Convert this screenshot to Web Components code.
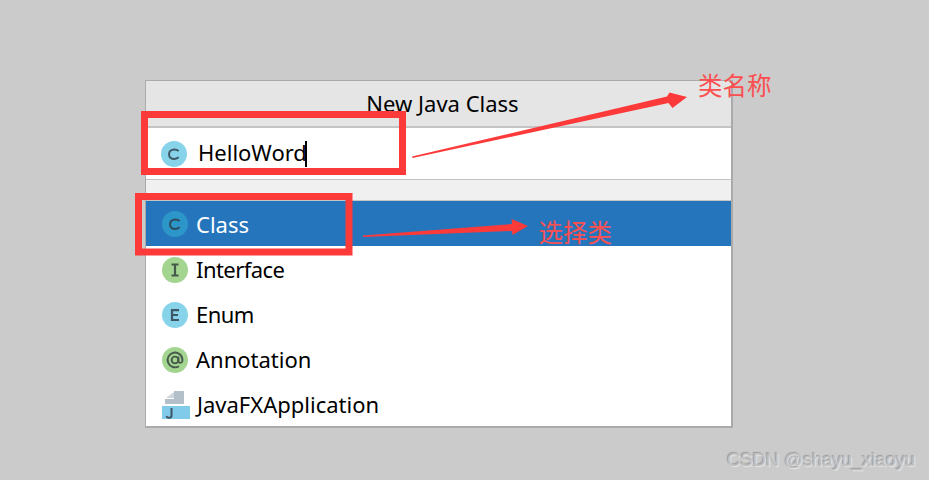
<!DOCTYPE html>
<html><head><meta charset="utf-8"><style>
html,body{margin:0;padding:0;background:#cbcbcb;}
body{width:929px;height:480px;overflow:hidden;font-family:"Noto Sans","Open Sans",sans-serif;}
</style></head><body>
<new-class-page></new-class-page>
<script>
const ICONS={
 c:`<svg width="26" height="26" viewBox="0 0 26 26"><circle cx="13" cy="13" r="13" fill="var(--bg,#87d3ea)"/><path d="M17.6 10.2C16.6 9 15.2 8.4 13.4 8.4C10.2 8.4 8 10.4 8 13.2C8 16 10.2 18 13.4 18C15.2 18 16.6 17.4 17.6 16.2" fill="none" stroke="var(--fg,#3f5866)" stroke-width="2"/></svg>`,
 i:`<svg width="26" height="26" viewBox="0 0 26 26"><circle cx="13" cy="13" r="13" fill="#a3d490"/><path d="M9.5 7.5H16.5M13 7.5V18.5M9.5 18.5H16.5" fill="none" stroke="#47594b" stroke-width="2.2"/></svg>`,
 e:`<svg width="26" height="26" viewBox="0 0 26 26"><circle cx="13" cy="13" r="13" fill="#87d3ea"/><path d="M17 8.2H10V18H17M10 13H16" fill="none" stroke="#3f5866" stroke-width="2.2"/></svg>`,
 a:`<svg width="26" height="26" viewBox="0 0 26 26"><circle cx="13" cy="13" r="13" fill="#a3d490"/><circle cx="13" cy="13" r="3.4" fill="none" stroke="#47594b" stroke-width="1.9"/><path d="M16.4 9.4V14.6A2.1 2.1 0 0 0 20.4 14V13A7.4 7.4 0 1 0 17 19.2" fill="none" stroke="#47594b" stroke-width="1.9"/></svg>`,
 j:`<svg width="28" height="28" viewBox="0 0 28 28" style="overflow:visible"><path d="M12 0H22V13H3V8H12Z" fill="#b4c0c9"/><path d="M12 1V7H4Z" fill="#cfd6db"/><rect y="15" width="28" height="13" fill="#80cbea"/><path d="M9.5 17V23.5A2.2 2.2 0 0 1 4.5 25" fill="none" stroke="#3f5866" stroke-width="2"/></svg>`
};
class XIcon extends HTMLElement{
 constructor(){super();this.attachShadow({mode:'open'});}
 connectedCallback(){this.shadowRoot.innerHTML=`<style>:host{display:block;line-height:0;flex:none}
 :host([name=j]){margin-right:-1px;width:28px}
 :host([down]){margin-top:2px}
 :host([slot=icon][field]){margin-top:4px}</style>`+ICONS[this.getAttribute('name')];}
}
class XRow extends HTMLElement{
 constructor(){super();this.attachShadow({mode:'open'}).innerHTML=`<style>
 :host{display:flex;align-items:center;height:45px;padding-left:16px;gap:8px;color:#000;font-size:22px;white-space:nowrap}
 :host([selected]){background:#2575bd;color:#fff;--bg:#2d96c9;--fg:#2c4a5c}
 :host([tight]) span{letter-spacing:-.55px}
 </style><slot name="icon"></slot><span><slot></slot></span>`;}
}
class XDialog extends HTMLElement{
 constructor(){super();this.attachShadow({mode:'open'}).innerHTML=`<style>
 :host{display:block;box-sizing:border-box;width:588px;height:348px;border:1px solid #aaa;border-right-width:2px;border-bottom-width:2px;background:#fff;font-size:22px;color:#000}
 .title{height:47px;box-sizing:border-box;background:#e5e5e5;border-bottom:2px solid #c4c4c4;display:flex;align-items:center;justify-content:center;padding:0 0 2px 8px}
 .input{height:52px;box-sizing:border-box;display:flex;align-items:center;padding:0 0 3px 15px;gap:11px;border-bottom:1px solid #c4c4c4}
 .caret{display:inline-block;width:2px;height:26px;background:#000;vertical-align:-6px;margin-left:-2px}
 .gap{height:21px;box-sizing:border-box;background:#f0f0f0;border-bottom:1px solid #c4c4c4}
 </style>
 <div class="title"><slot name="title"></slot></div>
 <div class="input"><slot name="icon"></slot><span><slot name="value"></slot><i class="caret"></i></span></div>
 <div class="gap"></div>
 <slot></slot>`;}
}
class XAnnotations extends HTMLElement{
 constructor(){super();this.attachShadow({mode:'open'}).innerHTML=`<style>
 :host{position:absolute;inset:0;display:block;pointer-events:none}
 svg{position:absolute;left:0;top:0}
 .t{position:absolute;font-family:"Noto Sans CJK SC",sans-serif;font-size:24.5px;line-height:28px;color:#fb4f50;white-space:nowrap}
 .w{position:absolute;left:727px;top:449px;font-family:"Liberation Sans",sans-serif;font-size:18.4px;line-height:22px;color:#bfbfbf;text-shadow:1px 1px 1px #e8e8e8,-1px -1px 1px #999;white-space:nowrap}
 </style>
 <svg width="929" height="480" viewBox="0 0 929 480">
  <rect x="144.5" y="114.5" width="258" height="57" fill="none" stroke="#fd3a3a" stroke-width="7"/>
  <rect x="138.5" y="196.5" width="210.5" height="55.5" fill="none" stroke="#fd3a3a" stroke-width="7"/>
  <path d="M412 156.5L667 96.5L669.5 92.5L687 97L672.5 108L668.5 103L412.5 158Z" fill="#fd3a3a"/>
  <path d="M363 235.5L512 224L511.5 219L528 226L512.5 235L512 231L363 237Z" fill="#fd3a3a"/>
 </svg>
 <span class="t" style="left:698px;top:71px">类名称</span>
 <span class="t" style="left:538.5px;top:218px">选择类</span>
 <span class="w">CSDN @shayu_xiaoyu</span>`;}
}
class NewClassPage extends HTMLElement{
 constructor(){super();this.attachShadow({mode:'open'}).innerHTML=`<style>
 :host{display:block;position:relative;width:929px;height:480px;box-sizing:border-box;padding:80px 0 0 145px;background:#cbcbcb}
 </style>
 <x-dialog>
  <span slot="title">New Java Class</span>
  <x-icon slot="icon" name="c" field></x-icon>
  <span slot="value">HelloWord</span>
  <x-row selected><x-icon slot="icon" name="c"></x-icon>Class</x-row>
  <x-row tight><x-icon slot="icon" name="i" down></x-icon>Interface</x-row>
  <x-row tight><x-icon slot="icon" name="e" down></x-icon>Enum</x-row>
  <x-row><x-icon slot="icon" name="a" down></x-icon>Annotation</x-row>
  <x-row><x-icon slot="icon" name="j" down></x-icon>JavaFXApplication</x-row>
 </x-dialog>
 <x-annotations></x-annotations>`;}
}
customElements.define('x-icon',XIcon);
customElements.define('x-row',XRow);
customElements.define('x-dialog',XDialog);
customElements.define('x-annotations',XAnnotations);
customElements.define('new-class-page',NewClassPage);
</script>
</body></html>
